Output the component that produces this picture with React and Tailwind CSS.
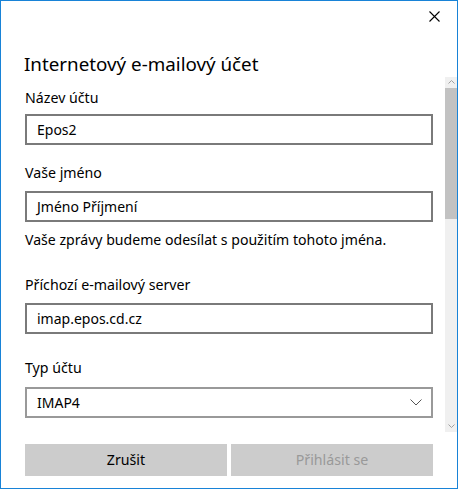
import React from "react";

function Field({ value, mt }) {
  return (
    <div className={`${mt} h-[31px] border-2 border-[#7a7a7a] bg-white flex items-center pl-[10px] text-[14px] text-black`}>
      {value}
    </div>
  );
}

function Label({ children, mt }) {
  return <div className={`${mt} h-[20px] leading-[20px] text-[14.2px] text-black`}>{children}</div>;
}

export default function App() {
  return (
    <div
      className="w-[458px] h-[489px] border border-[#1883d7] bg-white flex flex-col overflow-hidden"
      style={{ fontFamily: '"Noto Sans", "Open Sans", sans-serif' }}
    >
      <div className="flex justify-end h-[30px] shrink-0">
        <div className="w-[46px] h-[30px] flex items-center justify-center">
          <svg width="11" height="11" viewBox="0 0 11 11">
            <path d="M0.5 0.5 L10.5 10.5 M10.5 0.5 L0.5 10.5" stroke="#000" strokeWidth="1.1" fill="none" />
          </svg>
        </div>
      </div>
      <div className="mt-[20px] pl-[23px] h-[26px] leading-[26px] text-[18.8px] text-black shrink-0">
        Internetový e-mailový účet
      </div>
      <div className="flex h-[355px] shrink-0">
        <div className="w-[444px] pl-[24px] pr-[12px] flex flex-col">
          <Label mt="mt-[11px]">Název účtu</Label>
          <Field mt="mt-[6px]" value="Epos2" />
          <Label mt="mt-[18px]">Vaše jméno</Label>
          <Field mt="mt-[8px]" value="Jméno Příjmení" />
          <div className="mt-[8px] h-[20px] leading-[20px] text-[14.1px] text-black">
            Vaše zprávy budeme odesílat s použitím tohoto jména.
          </div>
          <Label mt="mt-[25px]">Příchozí e-mailový server</Label>
          <Field mt="mt-[8px]" value="imap.epos.cd.cz" />
          <Label mt="mt-[24px]">Typ účtu</Label>
          <div className="mt-[9px] h-[31px] border-2 border-[#999999] bg-white flex items-center justify-between pl-[10px] pr-[9px] text-[14px] text-black">
            <span>IMAP4</span>
            <svg width="12" height="7" viewBox="0 0 12 7">
              <path d="M0.5 0.5 L6 6 L11.5 0.5" stroke="#555" strokeWidth="1" fill="none" />
            </svg>
          </div>
        </div>
        <div className="w-[12px] bg-[#f0f0f0] flex flex-col">
          <div className="h-[11px] flex justify-center pt-[3px]">
            <svg width="7" height="4" viewBox="0 0 7 4">
              <path d="M0.5 3.5 L3.5 0.5 L6.5 3.5" stroke="#a0a0a0" strokeWidth="1" fill="none" />
            </svg>
          </div>
          <div className="h-[131px] bg-[#c2c2c2]" />
          <div className="flex-1" />
          <div className="h-[11px] flex justify-center pt-[3px]">
            <svg width="7" height="4" viewBox="0 0 7 4">
              <path d="M0.5 0.5 L3.5 3.5 L6.5 0.5" stroke="#a0a0a0" strokeWidth="1" fill="none" />
            </svg>
          </div>
        </div>
      </div>
      <div className="mt-[12px] pl-[24px] flex gap-[4px]">
        <div className="w-[202px] h-[32px] bg-[#cccccc] flex items-center justify-center text-[14.2px] text-black">
          Zrušit
        </div>
        <div className="w-[202px] h-[32px] bg-[#cccccc] flex items-center justify-center text-[14.2px] text-[#999999]">
          Přihlásit se
        </div>
      </div>
    </div>
  );
}
